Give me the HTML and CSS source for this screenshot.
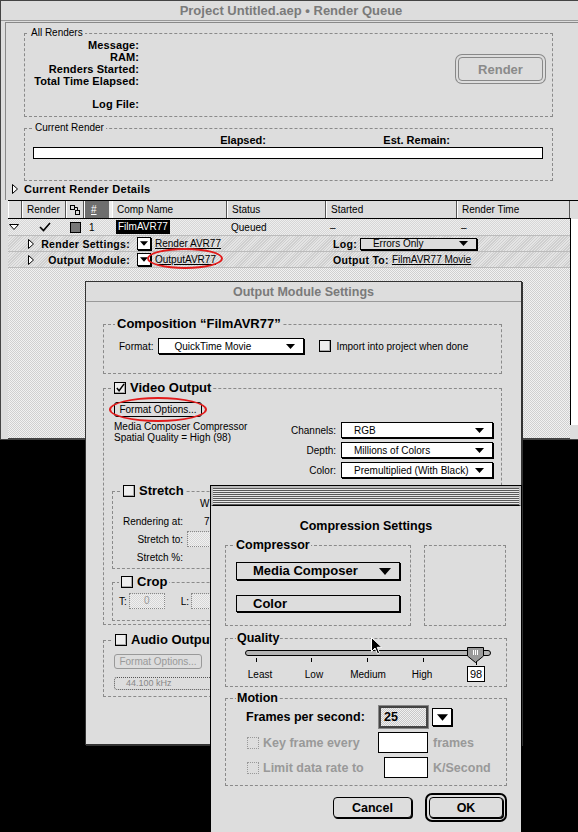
FILE: index.html
```html
<!DOCTYPE html>
<html lang="en">
<head>
  <meta charset="UTF-8" />
  <title>Render Queue</title>
  <link rel="stylesheet" href="styles.css">
</head>
<body>
<div class="desktop">

  <!-- Render Queue window -->
  <div class="window render-queue">
    <div class="titlebar">Project Untitled.aep • Render Queue</div>
    <div class="rq-panel">
      <fieldset class="group all-renders">
        <legend>All Renders</legend>
        <div class="all-body">
          <div class="stats">
            <div>Message:</div>
            <div>RAM:</div>
            <div>Renders Started:</div>
            <div>Total Time Elapsed:</div>
            <div class="log">Log File:</div>
          </div>
          <button class="mac-btn render-btn">Render</button>
        </div>
      </fieldset>
      <fieldset class="group current-render">
        <legend>Current Render</legend>
        <div class="times"><span class="elapsed">Elapsed:</span><span class="remain">Est. Remain:</span></div>
        <div class="progress"></div>
      </fieldset>
      <div class="details"><svg class="tri" viewBox="0 0 6 10"><path d="M0.5 0.5 L5.5 5 L0.5 9.5 Z"/></svg>Current Render Details</div>
    </div>

    <div class="queue">
      <div class="thead">
        <div class="th c0"></div>
        <div class="th c1">Render</div>
        <div class="th c2"><svg viewBox="0 0 10 10" width="10" height="10"><rect x="0.5" y="0.5" width="4" height="4" fill="none" stroke="#000"/><rect x="5.5" y="5.5" width="4" height="4" fill="none" stroke="#000"/><path d="M4.5 2.5 H7.5 V5.5" fill="none" stroke="#000"/></svg></div>
        <div class="th c3 hash"><span>#</span></div>
        <div class="th c4">Comp Name</div>
        <div class="th c5">Status</div>
        <div class="th c6">Started</div>
        <div class="th c7">Render Time</div>
      </div>
      <div class="queue-body">
        <div class="rows">
          <div class="row main-row">
            <div class="c0"><svg class="tri-down" viewBox="0 0 10 6"><path d="M0.5 0.5 H9.5 L5 5.5 Z"/></svg></div>
            <div class="c1"><svg class="check" viewBox="0 0 12 10"><path d="M1 5 L4.5 8.5 L11 1" fill="none" stroke="#000" stroke-width="1.6"/></svg></div>
            <div class="c2"><span class="label-swatch"></span></div>
            <div class="c3">1</div>
            <div class="c4"><span class="hilite">FilmAVR77</span></div>
            <div class="c5">Queued</div>
            <div class="c6">–</div>
            <div class="c7">–</div>
          </div>
          <div class="row sub-row">
            <span class="sub-tri"><svg class="tri" viewBox="0 0 6 10"><path d="M0.5 0.5 L5.5 5 L0.5 9.5 Z"/></svg></span>
            <span class="sub-label">Render Settings:</span>
            <span class="mini-pop"><svg viewBox="0 0 9 5"><path d="M0 0h9L4.5 5z"/></svg></span>
            <span class="link set-link">Render AVR77</span>
            <span class="sub-label2">Log:</span>
            <span class="log-pop">Errors Only<svg viewBox="0 0 9 5"><path d="M0 0h9L4.5 5z"/></svg></span>
          </div>
          <div class="row sub-row">
            <span class="sub-tri"><svg class="tri" viewBox="0 0 6 10"><path d="M0.5 0.5 L5.5 5 L0.5 9.5 Z"/></svg></span>
            <span class="sub-label">Output Module:</span>
            <span class="mini-pop"><svg viewBox="0 0 9 5"><path d="M0 0h9L4.5 5z"/></svg></span>
            <span class="link set-link circled">OutputAVR77<span class="ring ring-om"></span></span>
            <span class="sub-label2">Output To:</span>
            <span class="link">FilmAVR77 Movie</span>
          </div>
          <div class="empty"></div>
        </div>
        <div class="scrollbar"></div>
      </div>
    </div>
  </div>

  <!-- Output Module Settings window -->
  <div class="window om">
    <div class="titlebar">Output Module Settings</div>
    <div class="om-body">
      <fieldset class="group big comp">
        <legend>Composition “FilmAVR77”</legend>
        <div class="format-row">
          <span>Format:</span>
          <span class="popup fmt-pop">QuickTime Movie<svg viewBox="0 0 9 5"><path d="M0 0h9L4.5 5z"/></svg></span>
          <span class="cb"></span>
          <span>Import into project when done</span>
        </div>
      </fieldset>

      <fieldset class="group big video">
        <legend><span class="cb checked"><svg viewBox="0 0 11 11"><path d="M2 5.5 L4.5 8.5 L10 1" fill="none" stroke="#000" stroke-width="1.6"/></svg></span>Video Output</legend>
        <div class="opt-wrap">
          <button class="mac-btn small">Format Options...</button>
          <span class="ring ring-fo"></span>
        </div>
        <div class="vo-cols">
          <div class="vo-info">Media Composer Compressor<br>Spatial Quality = High (98)</div>
          <div class="vo-selects">
            <span class="sel-label">Channels:</span><span class="popup">RGB<svg viewBox="0 0 9 5"><path d="M0 0h9L4.5 5z"/></svg></span>
            <span class="sel-label">Depth:</span><span class="popup">Millions of Colors<svg viewBox="0 0 9 5"><path d="M0 0h9L4.5 5z"/></svg></span>
            <span class="sel-label">Color:</span><span class="popup">Premultiplied (With Black)<svg viewBox="0 0 9 5"><path d="M0 0h9L4.5 5z"/></svg></span>
          </div>
        </div>
        <fieldset class="group big sub stretch">
          <legend><span class="cb"></span>Stretch</legend>
          <div class="st-w">W</div>
          <div class="st-row"><span class="st-label">Rendering at:</span><span class="st-val">7</span></div>
          <div class="st-row"><span class="st-label">Stretch to:</span><span class="field dim"></span></div>
          <div class="st-row"><span class="st-label">Stretch %:</span></div>
        </fieldset>
        <fieldset class="group big sub crop">
          <legend><span class="cb"></span>Crop</legend>
          <div class="crop-row">
            <span>T:</span><span class="field dim t-field">0</span>
            <span class="l-label">L:</span><span class="field dim"></span>
          </div>
        </fieldset>
      </fieldset>

      <fieldset class="group big audio">
        <legend><span class="cb"></span>Audio Output</legend>
        <button class="mac-btn small disabled">Format Options...</button>
        <div class="dotted-pop">44.100 kHz</div>
      </fieldset>
    </div>
  </div>

  <!-- Compression Settings dialog -->
  <div class="window cs">
    <div class="stripes"></div>
    <div class="cs-body">
      <div class="cs-title">Compression Settings</div>
      <div class="cs-top">
        <fieldset class="group cs-group compressor">
          <legend>Compressor</legend>
          <div class="cs-pop">Media Composer<svg viewBox="0 0 12 7"><path d="M0 0h12L6 7z"/></svg></div>
          <div class="cs-box">Color</div>
        </fieldset>
        <div class="preview"></div>
      </div>

      <fieldset class="group cs-group quality">
        <legend>Quality</legend>
        <svg class="slider" width="270" height="19" viewBox="0 0 270 19">
          <rect x="19.5" y="4.5" width="245" height="5" rx="2.5" fill="#b4b4b4" stroke="#000"/>
          <g stroke="#000">
            <line x1="30.5" y1="12" x2="30.5" y2="16"/>
            <line x1="85.5" y1="12" x2="85.5" y2="16"/>
            <line x1="141.5" y1="12" x2="141.5" y2="16"/>
            <line x1="197.5" y1="12" x2="197.5" y2="16"/>
            <line x1="250.5" y1="14" x2="250.5" y2="19"/>
          </g>
          <path d="M241.5 1.5 H257.5 V10 L249.5 16.5 L241.5 10 Z" fill="#9a9a9a" stroke="#000"/>
          <g stroke="#fff"><line x1="247.5" y1="4" x2="247.5" y2="9"/><line x1="249.5" y1="4" x2="249.5" y2="9"/><line x1="251.5" y1="4" x2="251.5" y2="9"/></g>
        </svg>
        <div class="q-labels"><span>Least</span><span>Low</span><span>Medium</span><span>High</span><span><b class="q-val">98</b></span></div>
      </fieldset>

      <fieldset class="group cs-group motion">
        <legend>Motion</legend>
        <div class="m-row">
          <span class="m-label fps-label">Frames per second:</span>
          <span class="fps-field">25</span>
          <span class="fps-arrow"><svg viewBox="0 0 12 7"><path d="M0 0h12L6 7z"/></svg></span>
        </div>
        <div class="m-row off">
          <span class="cb gray"></span>
          <span class="m-label key-label">Key frame every</span>
          <span class="m-input key-input"></span>
          <span>frames</span>
        </div>
        <div class="m-row off">
          <span class="cb gray"></span>
          <span class="m-label rate-label">Limit data rate to</span>
          <span class="m-input rate-input"></span>
          <span>K/Second</span>
        </div>
      </fieldset>

      <div class="cs-buttons">
        <button class="mac-btn cs-btn">Cancel</button>
        <span class="default-ring"><button class="mac-btn cs-btn ok">OK</button></span>
      </div>
    </div>
    <svg class="cursor" width="12" height="18" viewBox="0 0 12 18"><path d="M0.5 0.5 V14.5 L4 11 L6.5 16.8 L8.6 15.9 L6.2 10.3 H10.8 Z" fill="#000" stroke="#fff"/></svg>
  </div>

</div>
</body>
</html>
```

FILE: styles.css
```css
* {
  box-sizing: border-box;
}

html, body {
  margin: 0;
  padding: 0;
  background: #000;
}

body {
  font-family: "Liberation Sans", Arial, sans-serif;
  font-size: 10px;
  color: #000;
}

.desktop {
  position: relative;
  width: 578px;
  height: 832px;
  overflow: hidden;
  background: #000;
}

.window {
  position: absolute;
  background: #dddddd;
}

.titlebar {
  height: 20px;
  line-height: 20px;
  text-align: center;
  font-size: 12.5px;
  font-weight: bold;
  color: #7a7a7a;
  border-bottom: 1px solid #999;
}

/* shared controls */

.group {
  margin: 0;
  padding: 0 8px;
  min-width: 0;
  border: 1px dashed #8a8a8a;
}

.group legend {
  padding: 0 2px;
  line-height: 12px;
}

.big > legend {
  font-size: 13px;
  font-weight: bold;
  line-height: 16px;
  display: flex;
  align-items: center;
  gap: 4px;
}

.mac-btn {
  font-family: inherit;
  background: #ddd;
  border: 1px solid #000;
  border-radius: 4px;
  padding: 0;
  color: #000;
}

.popup {
  position: relative;
  display: flex;
  align-items: center;
  height: 16px;
  padding-left: 12px;
  background: #fff;
  border: 1px solid #000;
  box-shadow: 1px 1px 0 #000;
}

.popup svg {
  position: absolute;
  right: 8px;
  top: 5px;
  width: 9px;
  height: 5px;
}

.cb {
  display: inline-block;
  width: 12px;
  height: 12px;
  border: 1px solid #000;
  background: #eee;
  box-shadow: inset -1px -1px 0 #aaa;
}

.cb svg {
  display: block;
  width: 10px;
  height: 10px;
}

.cb.gray {
  border: 1px dotted #999;
  box-shadow: none;
  background: transparent;
}

.ring {
  position: absolute;
  border: 2px solid #e21b1b;
  border-radius: 50%;
  pointer-events: none;
}

/* Render Queue */

.render-queue {
  left: 0;
  top: 0;
  width: 582px;
  height: 440px;
  border: 1px solid #444;
}

.render-queue .titlebar {
  font-size: 13px;
}

.rq-panel {
  margin: 1px 3px 0 4px;
  padding-top: 4px;
  border-top: 1px solid #888;
  border-left: 1px solid #888;
  height: 178px;
}

.all-renders {
  margin: 0 25px 0 18px;
  padding: 0 9px 6px 4px;
}

.all-body {
  display: flex;
  align-items: flex-start;
}

.stats {
  width: 110px;
  text-align: right;
  font-weight: bold;
  font-size: 11px;
  line-height: 12px;
  letter-spacing: 0.1px;
}

.stats .log {
  margin-top: 11px;
}

.render-btn {
  margin: 18px 0 0 auto;
  width: 85px;
  height: 24px;
  font-size: 13px;
  font-weight: bold;
  color: #8a8a8a;
  border: 1px solid #888;
  box-shadow: 0 0 0 2px #ddd, 0 0 0 3px #888;
}

.current-render {
  margin: 5px 25px 0 18px;
  padding: 0 9px 21px 8px;
}

.times {
  display: flex;
  font-weight: bold;
  font-size: 11px;
  line-height: 12px;
}

.times .elapsed {
  width: 233px;
  text-align: right;
}

.times .remain {
  width: 184px;
  text-align: right;
}

.progress {
  margin-top: 1px;
  height: 12px;
  background: #fff;
  border: 1px solid #000;
}

.details {
  margin-top: 2px;
  display: flex;
  align-items: center;
  height: 12px;
  font-weight: bold;
  font-size: 11px;
  letter-spacing: 0.3px;
}

.tri {
  width: 6px;
  height: 10px;
  fill: #fff;
  stroke: #000;
}

.details .tri {
  margin: 0 6px 0 6px;
}

.queue {
  margin-left: 7px;
  border-top: 1px solid #000;
}

.thead {
  display: flex;
  height: 18px;
  border-bottom: 1px solid #000;
  width: 563px;
}

.th {
  display: flex;
  align-items: center;
  padding-left: 4px;
  border-right: 1px solid #555;
  border-left: 1px solid #fff;
  background: #dcdcdc;
  font-size: 10px;
}

.c0 { width: 14px; }
.c1 { width: 44px; }
.c2 { width: 18px; }
.c3 { width: 28px; }
.c4 { width: 115px; }
.c5 { width: 99px; }
.c6 { width: 131px; }
.c7 { width: 113px; }

.th.c2 {
  justify-content: center;
  padding-left: 0;
}

.th.hash {
  background: #6e6e6e;
  color: #fff;
  padding-left: 6px;
  border-right: 3px solid #eee;
}

.th.hash span {
  text-decoration: underline;
}

.queue-body {
  display: flex;
  height: 220px;
}

.rows {
  flex: 1;
  display: flex;
  flex-direction: column;
}

.row {
  display: flex;
  align-items: center;
  border-bottom: 1px solid #bbb;
}

.main-row {
  height: 17px;
  background: repeating-conic-gradient(#eeeeee 0 25%, #d6d6d6 0 50%) 0 0 / 2px 2px;
}

.main-row > div {
  display: flex;
  align-items: center;
  padding-left: 4px;
}

.tri-down {
  width: 10px;
  height: 6px;
  fill: #fff;
  stroke: #000;
}

.main-row .c0 {
  padding-left: 1px;
}

.check {
  width: 12px;
  height: 10px;
  margin-left: 13px;
}

.label-swatch {
  width: 11px;
  height: 11px;
  background: #777;
  border: 1px solid #000;
}

.main-row .c3 {
  padding-left: 5px;
}

.hilite {
  background: #000;
  color: #fff;
  padding: 1px 2px;
  line-height: 12px;
}

.sub-row {
  height: 16px;
  background: repeating-linear-gradient(135deg, #e4e4e4 0 1px, #cfcfcf 1px 2px);
}

.sub-tri {
  width: 32px;
  display: flex;
  padding-left: 20px;
}

.sub-label {
  width: 90px;
  text-align: right;
  font-weight: bold;
  font-size: 10.5px;
  letter-spacing: 0.3px;
}

.mini-pop {
  margin-left: 7px;
  width: 14px;
  height: 13px;
  background: #fff;
  border: 1px solid #000;
  box-shadow: 1px 1px 0 #000;
  display: flex;
  align-items: center;
  justify-content: center;
}

.mini-pop svg {
  width: 8px;
  height: 5px;
}

.link {
  text-decoration: underline;
  position: relative;
}

.set-link {
  width: 178px;
  margin-left: 4px;
}

.ring-om {
  left: -8px;
  top: -6px;
  width: 76px;
  height: 21px;
}

.sub-label2 {
  font-weight: bold;
  font-size: 10.5px;
  letter-spacing: 0.3px;
  margin-right: 3px;
}

.log-pop {
  position: relative;
  width: 117px;
  height: 12px;
  line-height: 10px;
  padding-left: 12px;
  background: #ddd;
  border: 1px solid #000;
  box-shadow: 1px 1px 0 #000;
}

.log-pop svg {
  position: absolute;
  right: 8px;
  top: 2px;
  width: 9px;
  height: 5px;
}

.empty {
  flex: 1;
  background: repeating-conic-gradient(#f2f2f2 0 25%, #d0d0d0 0 50%) 0 0 / 2px 2px;
  border-bottom: 1px solid #444;
}

.scrollbar {
  width: 24px;
  background: #fff;
  border-left: 1px solid #000;
  margin-bottom: 14px;
}

/* Output Module Settings */

.om {
  left: 85px;
  top: 281px;
  width: 437px;
  height: 464px;
  border: 1px solid #333;
  box-shadow: 1px 1px 0 #333;
}

.om-body {
  padding: 14px 19px 0 17px;
}

.comp {
  padding: 0 10px 19px 15px;
}

.comp > legend {
  margin-left: -4px;
}

.format-row {
  display: flex;
  align-items: center;
  margin-top: 6px;
}

.fmt-pop {
  width: 146px;
  padding-left: 15px;
  margin: 0 15px 0 5px;
}

.format-row .cb {
  margin-right: 5px;
}

.video {
  margin-top: 6px;
  padding: 0 8px 3px 10px;
}

.video > legend {
  margin-left: -2px;
}

.opt-wrap {
  position: relative;
  margin-top: 6px;
  height: 15px;
}

.mac-btn.small {
  display: block;
  width: 88px;
  height: 15px;
  font-size: 10px;
  border-radius: 3px;
}

.ring-fo {
  left: -5px;
  top: -5px;
  width: 98px;
  height: 25px;
}

.vo-cols {
  display: flex;
  justify-content: space-between;
  margin-top: 4px;
}

.vo-info {
  line-height: 11px;
}

.vo-selects {
  display: grid;
  grid-template-columns: auto 152px;
  column-gap: 5px;
  row-gap: 4px;
  align-items: center;
  padding-top: 1px;
}

.sel-label {
  text-align: right;
}

.stretch {
  margin: 5px 0 0 -2px;
  padding: 0 8px 2px 8px;
}

.st-w {
  height: 13px;
  line-height: 10px;
  padding-left: 79px;
}

.st-row {
  display: flex;
  align-items: center;
  height: 18px;
}

.st-label {
  width: 70px;
  margin-left: -8px;
  text-align: right;
}

.st-val {
  margin-left: 21px;
}

.field {
  display: inline-block;
  height: 16px;
  width: 36px;
  margin-left: 4px;
  border: 1px dotted #888;
  text-align: center;
  line-height: 14px;
  color: #999;
}

.dim {
  background: repeating-conic-gradient(#f0f0f0 0 25%, #d8d8d8 0 50%) 0 0 / 2px 2px;
}

.crop {
  margin: 5px 0 0 -2px;
  padding: 0 8px 11px 6px;
}

.crop-row {
  display: flex;
  align-items: center;
  margin-top: 3px;
}

.crop-row .field {
  margin-left: 2px;
}

.l-label {
  margin-left: 16px;
}

.audio {
  margin-top: 7px;
  padding: 0 8px 6px 10px;
  width: 200px;
}

.audio > legend {
  margin-left: -1px;
}

.audio .mac-btn {
  margin-top: 6px;
}

.mac-btn.disabled {
  color: #999;
  border-color: #999;
}

.dotted-pop {
  margin-top: 8px;
  height: 13px;
  line-height: 11px;
  padding-left: 11px;
  border: 1px dotted #555;
  border-radius: 3px;
  color: #888;
  font-size: 9px;
}

/* Compression Settings */

.cs {
  left: 210px;
  top: 485px;
  width: 312px;
  height: 350px;
  border: 1px solid #000;
  font-size: 12px;
}

.stripes {
  height: 20px;
  border: 2px solid #bbb;
  border-bottom: 1px solid #000;
  background: repeating-linear-gradient(#5a5a5a 0 1px, #e8e8e8 1px 2px);
}

.cs-body {
  padding: 0 14px;
}

.cs-title {
  margin-top: 13px;
  text-align: center;
  font-weight: bold;
  font-size: 12.5px;
  line-height: 14px;
}

.cs-group > legend {
  font-weight: bold;
  font-size: 12.5px;
  line-height: 16px;
  padding: 0 1px;
}

.cs-top {
  display: flex;
  gap: 13px;
  margin-top: 4px;
}

.compressor {
  width: 186px;
  padding: 0 9px 13px 10px;
}

.compressor > legend {
  margin-left: -1px;
}

.cs-pop {
  position: relative;
  margin-top: 9px;
  width: 164px;
  height: 18px;
  line-height: 16px;
  padding-left: 16px;
  font-weight: bold;
  font-size: 13px;
  border: 1px solid #000;
  box-shadow: 1px 1px 0 #000;
}

.cs-pop svg {
  position: absolute;
  right: 8px;
  top: 5px;
  width: 12px;
  height: 7px;
}

.cs-box {
  margin-top: 15px;
  width: 164px;
  height: 17px;
  line-height: 15px;
  padding-left: 16px;
  font-weight: bold;
  font-size: 13px;
  border: 1px solid #000;
  box-shadow: 1px 1px 0 #000;
}

.preview {
  margin-top: 8px;
  width: 82px;
  height: 81px;
  border: 1px dashed #8a8a8a;
}

.quality {
  margin-top: 4px;
  padding: 0 0 4px 0;
  position: relative;
}

.quality > legend {
  margin-left: 10px;
}

.slider {
  display: block;
}

.q-labels {
  display: flex;
  margin-top: 1px;
  padding-left: 7px;
  font-size: 10px;
  height: 16px;
  align-items: center;
}

.q-labels span {
  width: 54px;
  text-align: center;
}

.q-val {
  font-weight: normal;
  border: 1px solid #000;
  background: #fff;
  padding: 1px 2px;
  font-size: 11px;
}

.motion {
  margin-top: 3px;
  padding: 0 8px 7px 20px;
}

.motion > legend {
  margin-left: -10px;
}

.m-row {
  display: flex;
  align-items: center;
  font-weight: bold;
  font-size: 12.5px;
  margin-top: 4px;
}

.m-row:first-of-type {
  margin-top: 0;
}

.m-row.off {
  color: #999;
}

.m-row .cb.gray {
  margin-left: 1px;
  width: 12px;
  height: 12px;
  margin-right: 4px;
}

.fps-label {
  width: 133px;
}

.fps-field {
  width: 49px;
  height: 22px;
  line-height: 18px;
  padding-left: 3px;
  border: 2px solid #444;
  outline: 1px solid #888;
  background: repeating-conic-gradient(#f0f0f0 0 25%, #c8c8c8 0 50%) 0 0 / 2px 2px;
}

.fps-arrow {
  margin-left: 4px;
  width: 20px;
  height: 18px;
  background: #fff;
  border: 1px solid #000;
  box-shadow: 1px 1px 0 #000;
  display: flex;
  align-items: center;
  justify-content: center;
}

.fps-arrow svg {
  width: 11px;
  height: 7px;
}

.key-label {
  width: 115px;
}

.rate-label {
  width: 121px;
}

.m-input {
  height: 21px;
  background: #fff;
  border: 1px solid #000;
  margin-right: 5px;
}

.key-input {
  width: 50px;
}

.rate-input {
  width: 44px;
}

.cs-buttons {
  display: flex;
  justify-content: flex-end;
  align-items: center;
  gap: 13px;
  margin-top: 7px;
}

.cs-btn {
  width: 79px;
  height: 21px;
  font-size: 12.5px;
  font-weight: bold;
  box-shadow: 1px 1px 0 #000;
}

.default-ring {
  display: inline-flex;
  padding: 2px;
  border: 2px solid #000;
  border-radius: 7px;
}

.cs-btn.ok {
  width: 74px;
}

.cursor {
  position: absolute;
  left: 160px;
  top: 151px;
}
```
